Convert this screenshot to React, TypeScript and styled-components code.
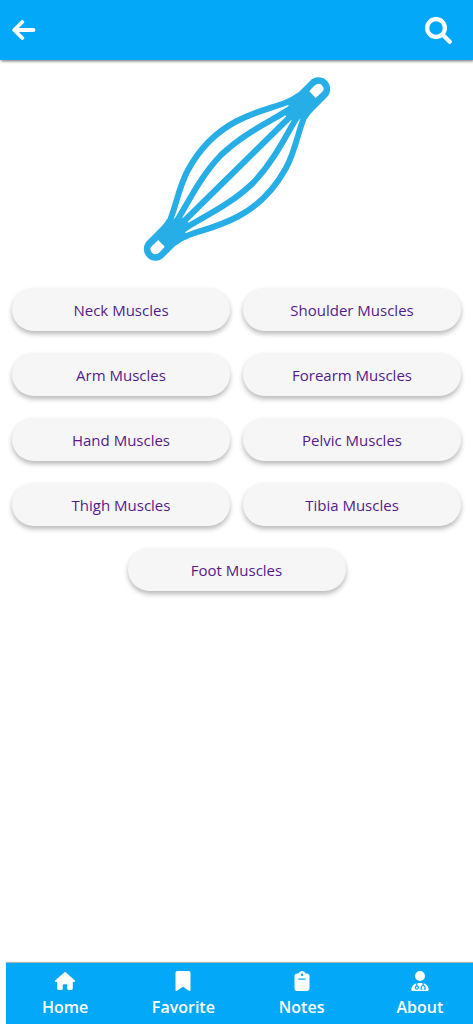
import React from "react";
import styled, { createGlobalStyle } from "styled-components";
import { FaBookmark, FaClipboard, FaHouse, FaUserDoctor } from "react-icons/fa6";

const GlobalStyle = createGlobalStyle`
  *, *::before, *::after { box-sizing: border-box; }
  body {
    margin: 0;
    background: #fff;
    font-family: "Segoe UI", "Open Sans", "Noto Sans", sans-serif;
  }
`;

const Page = styled.div`
  display: flex;
  flex-direction: column;
  min-height: 100vh;
  overflow-x: hidden;
`;

const Header = styled.header`
  display: flex;
  align-items: center;
  justify-content: space-between;
  height: 60px;
  padding: 0 21px 0 12px;
  background: #03a9f8;
  box-shadow: 1px 1px 3px rgba(0, 0, 0, 0.6);
`;

const IconButton = styled.button`
  display: flex;
  padding: 0;
  border: 0;
  background: none;
  color: #fff;
  cursor: pointer;
`;

const LineIcon = styled.svg<{ $width: number; $height: number }>`
  width: ${(p) => p.$width}px;
  height: ${(p) => p.$height}px;
  fill: none;
  stroke: currentColor;
  stroke-linecap: round;
  stroke-linejoin: round;
`;

const Main = styled.main`
  display: flex;
  flex-direction: column;
  align-items: center;
  gap: 18px;
  padding: 10px 12px 32px;
`;

const Illustration = styled.svg`
  width: 202px;
  height: 200px;
`;

const MuscleList = styled.nav`
  display: flex;
  flex-wrap: wrap;
  justify-content: center;
  gap: 22px 13px;
  width: 100%;
`;

const MuscleLink = styled.a`
  display: flex;
  align-items: center;
  justify-content: center;
  width: calc((100% - 13px) / 2);
  height: 43px;
  border-radius: 22px;
  background: #f6f6f6;
  box-shadow: 0 3px 5px rgba(0, 0, 0, 0.28);
  color: #551a8b;
  font-size: 15px;
  line-height: 20px;
  text-decoration: none;
`;

const TabBar = styled.nav`
  display: flex;
  flex-shrink: 0;
  width: 100%;
  height: 61px;
  margin-top: auto;
  margin-left: 6px;
  background: #03a9f8;
  box-shadow: 0 -1px 1px rgba(0, 0, 0, 0.3);
`;

const Tab = styled.a`
  display: flex;
  flex: 1;
  flex-direction: column;
  align-items: center;
  gap: 4px;
  padding-top: 8px;
  color: #fff;
  font-size: 16px;
  font-weight: 600;
  line-height: 24px;
  text-decoration: none;

  svg {
    font-size: 20px;
  }
`;

const MUSCLES = [
  "Neck Muscles",
  "Shoulder Muscles",
  "Arm Muscles",
  "Forearm Muscles",
  "Hand Muscles",
  "Pelvic Muscles",
  "Thigh Muscles",
  "Tibia Muscles",
  "Foot Muscles",
];

const TABS = [
  { label: "Home", Icon: FaHouse },
  { label: "Favorite", Icon: FaBookmark },
  { label: "Notes", Icon: FaClipboard },
  { label: "About", Icon: FaUserDoctor },
];

/* One half of the muscle: a tendon end and the two fibres above the axis. */
function MuscleHalf({ transform }: { transform?: string }) {
  return (
    <g transform={transform}>
      <path
        fill="#27aee6"
        stroke="none"
        fillRule="evenodd"
        d="M11 171L21 161C25 157 29 153 31 149L35 151L41 147L46 147.500L53 153L49 162L53 167C46 170 40 175 36 179L28 187A11.500 11.500 0 0 1 11 171ZM22.300 170L28.700 176.700L24 182Q19.500 186 16.300 183Q12.500 179 16 176Z"
      />
      <path d="M30 159C39 144 41 120 52 100C64 78 82 61 100 51.500C119 41.500 132 39 149 33Q157 30 164 25" />
      <path d="M38 155C49 140 61 110 85 85C110 61 140 49 155 38" />
    </g>
  );
}

export default function App() {
  return (
    <Page>
      <GlobalStyle />
      <Header>
        <IconButton type="button" aria-label="Back">
          <LineIcon $width={24} $height={20} viewBox="0 0 24 20" strokeWidth="3.8">
            <path d="M10.300 2L2.200 10L10.300 18M3 10H21.500" />
          </LineIcon>
        </IconButton>
        <IconButton type="button" aria-label="Search">
          <LineIcon $width={27} $height={27} viewBox="0 0 27 27" strokeWidth="4.2">
            <circle cx="11" cy="11" r="8.900" />
            <path d="M17.500 17.500L24.700 24.700" />
          </LineIcon>
        </IconButton>
      </Header>
      <Main>
        <Illustration
          viewBox="0 0 202 200"
          fill="none"
          stroke="#27aee6"
          strokeWidth="6"
          role="img"
          aria-label="Muscle"
        >
          <path d="M36 163L166 35" />
          <MuscleHalf />
          <MuscleHalf transform="rotate(180 101 99)" />
        </Illustration>
        <MuscleList aria-label="Muscle groups">
          {MUSCLES.map((name) => (
            <MuscleLink key={name} href="#">
              {name}
            </MuscleLink>
          ))}
        </MuscleList>
      </Main>
      <TabBar aria-label="Main">
        {TABS.map(({ label, Icon }) => (
          <Tab key={label} href="#">
            <Icon />
            {label}
          </Tab>
        ))}
      </TabBar>
    </Page>
  );
}
